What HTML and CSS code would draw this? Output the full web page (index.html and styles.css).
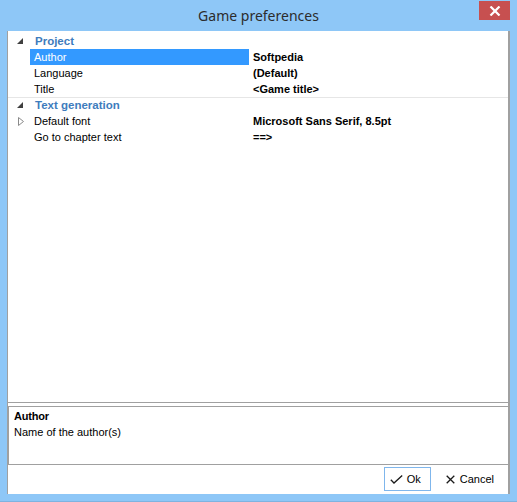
FILE: index.html
```html
<!DOCTYPE html>
<html>
<head>
<meta charset="utf-8">
<link rel="stylesheet" href="styles.css">
</head>
<body>
<div class="window">
  <div class="titlebar">
    <span class="title">Game preferences</span>
    <div class="close">
      <svg width="12" height="10" viewBox="0 0 12 10"><path d="M1.5 0.5 L10.5 9.5 M10.5 0.5 L1.5 9.5" stroke="#fff" stroke-width="2.2" fill="none"/></svg>
    </div>
  </div>
  <div class="client">
    <div class="grid">
      <div class="row cat">
        <div class="gutter"><svg class="exp" width="6" height="6" viewBox="0 0 6 6"><polygon points="6,0 6,6 0,6" fill="#404040"/></svg></div>
        <div class="label cat-label">Project</div>
      </div>
      <div class="row">
        <div class="gutter"></div>
        <div class="label selected">Author</div>
        <div class="value">Softpedia</div>
      </div>
      <div class="row">
        <div class="gutter"></div>
        <div class="label">Language</div>
        <div class="value">(Default)</div>
      </div>
      <div class="row">
        <div class="gutter"></div>
        <div class="label">Title</div>
        <div class="value">&lt;Game title&gt;</div>
      </div>
      <div class="row cat sep">
        <div class="gutter"><svg class="exp" width="6" height="6" viewBox="0 0 6 6"><polygon points="6,0 6,6 0,6" fill="#404040"/></svg></div>
        <div class="label cat-label">Text generation</div>
      </div>
      <div class="row">
        <div class="gutter"><svg class="col" width="6" height="9" viewBox="0 0 6 9"><polygon points="0.5,0.5 5.5,4.5 0.5,8.5" fill="none" stroke="#8a8a8a" stroke-width="1"/></svg></div>
        <div class="label">Default font</div>
        <div class="value">Microsoft Sans Serif, 8.5pt</div>
      </div>
      <div class="row">
        <div class="gutter"></div>
        <div class="label">Go to chapter text</div>
        <div class="value">==&gt;</div>
      </div>
    </div>
    <div class="desc">
      <div class="desc-title">Author</div>
      <div class="desc-text">Name of the author(s)</div>
    </div>
    <div class="footer">
      <button class="btn ok">
        <svg width="13" height="9" viewBox="0 0 13 9"><path d="M0.8 4.8 L4 8 L12.2 0.6" stroke="#1a1a1a" stroke-width="1.3" fill="none"/></svg>
        <span>Ok</span>
      </button>
      <button class="btn cancel">
        <svg width="9" height="9" viewBox="0 0 9 9"><path d="M0.7 0.7 L8.3 8.3 M8.3 0.7 L0.7 8.3" stroke="#1a1a1a" stroke-width="1.3" fill="none"/></svg>
        <span>Cancel</span>
      </button>
    </div>
  </div>
</div>
</body>
</html>
```

FILE: styles.css
```css
* { box-sizing: border-box; }
html, body { margin: 0; padding: 0; }
body {
  width: 517px;
  height: 502px;
  overflow: hidden;
  font-family: "Liberation Sans", Arial, sans-serif;
  font-size: 11px;
}
.window {
  width: 517px;
  height: 502px;
  background: #8ec7f7;
  border-bottom: 1px solid #7fb3e0;
  display: flex;
  flex-direction: column;
}
.titlebar {
  height: 31px;
  position: relative;
  display: flex;
  justify-content: center;
  align-items: center;
  flex: none;
}
.title {
  font-family: "Noto Sans", "Open Sans", sans-serif;
  font-size: 14px;
  color: #2c2c2c;
  margin-top: -1px;
}
.close {
  position: absolute;
  left: 479px;
  top: 1px;
  width: 31px;
  height: 19px;
  background: #c75050;
  display: flex;
  align-items: center;
  justify-content: center;
}
.client {
  margin-left: 7px;
  width: 503px;
  height: 463px;
  background: #fff;
  border-left: 1px solid #a0a0a0;
  border-right: 2px solid #a0a0a0;
  display: flex;
  flex-direction: column;
  flex: none;
}
.grid {
  height: 372px;
  border-bottom: 1px solid #a0a0a0;
  padding-top: 2px;
  flex: none;
}
.row {
  height: 16px;
  display: flex;
  align-items: stretch;
  line-height: 16px;
  color: #000;
}
.row.sep {
  border-top: 1px solid #e6e6e6;
  line-height: 15px;
}
.gutter {
  width: 22px;
  flex: none;
  position: relative;
}
.exp {
  position: absolute;
  left: 9px;
  top: 5px;
}
.row.sep .exp { top: 4px; }
.col {
  position: absolute;
  left: 10px;
  top: 4px;
}
.label {
  width: 219px;
  flex: none;
  padding-left: 4px;
  white-space: nowrap;
}
.cat-label {
  font-weight: bold;
  color: #3e7cbd;
  padding-left: 5px;
  font-size: 11.5px;
}
.selected {
  background: #3399ff;
  color: #fff;
}
.value {
  padding-left: 4px;
  font-weight: bold;
  white-space: nowrap;
}
.desc {
  margin-top: 3px;
  height: 59px;
  border-top: 1px solid #a0a0a0;
  border-bottom: 1px solid #a0a0a0;
  border-left: 1px solid #a0a0a0;
  padding: 1px 0 0 5px;
  flex: none;
  line-height: 16px;
}
.desc-title {
  font-weight: bold;
  letter-spacing: -0.2px;
}
.footer {
  flex: 1;
  display: flex;
  justify-content: flex-end;
  align-items: flex-start;
  padding-top: 2px;
  padding-right: 7px;
  gap: 5px;
}
.btn {
  font-family: "Liberation Sans", Arial, sans-serif;
  font-size: 11px;
  height: 24px;
  border: 1px solid transparent;
  background: #fff;
  display: flex;
  align-items: center;
  gap: 4px;
  padding: 0 5px;
  color: #000;
}
.btn.ok {
  width: 47px;
  border-color: #7fb6ec;
  padding-left: 5px;
}
.btn.cancel {
  padding-left: 9px;
  padding-right: 6px;
  gap: 5px;
}
```
